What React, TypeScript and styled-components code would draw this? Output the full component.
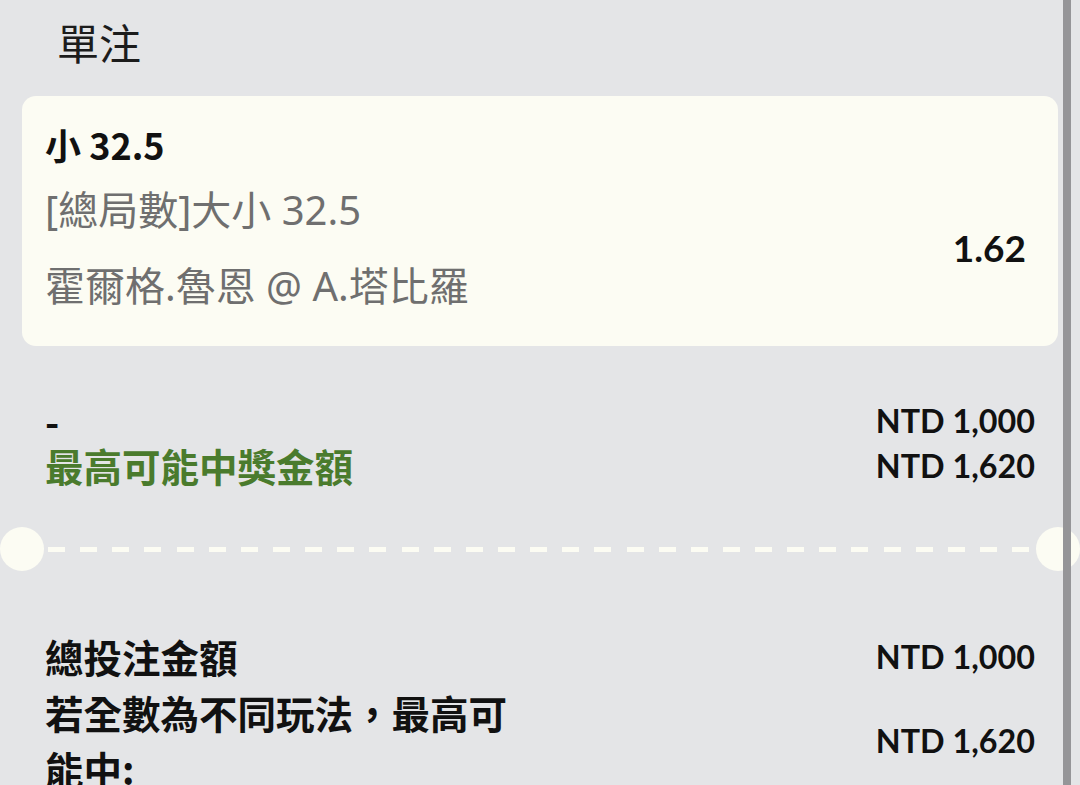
import React from "react";
import styled, { createGlobalStyle } from "styled-components";

const GlobalStyle = createGlobalStyle`
  html, body {
    margin: 0;
    padding: 0;
    background: #e4e5e7;
    overflow: hidden;
  }
  body {
    font-family: "Noto Sans CJK TC", "Noto Sans", sans-serif;
    color: #121212;
  }
`;

const cream = "#fcfcf3";

const Page = styled.div`
  width: 1080px;
  height: 785px;
  box-sizing: border-box;
  padding: 12px 22px 0;
`;

const Title = styled.h1`
  margin: 0;
  padding-left: 35px;
  font-size: 42px;
  line-height: 60px;
  font-weight: 400;
  color: #1c1c1c;
`;

const BetCard = styled.div`
  margin-top: 24px;
  height: 250px;
  box-sizing: border-box;
  background: ${cream};
  border-radius: 14px;
  padding: 24px 32px 0 23px;
  display: flex;
  justify-content: space-between;
`;

const BetInfo = styled.div`
  display: flex;
  flex-direction: column;
`;

const Selection = styled.div`
  font-family: "Noto Sans CJK TC", sans-serif;
  font-size: 36px;
  font-weight: 700;
  line-height: 48px;
  color: #111;
`;

const Detail = styled.div<{ $gap: number }>`
  margin-top: ${(p) => p.$gap}px;
  font-family: "Noto Sans", "Noto Sans CJK TC", sans-serif;
  font-size: 40px;
  line-height: 60px;
  color: #6f6f6f;
`;

const Odds = styled.div`
  align-self: center;
  margin-top: 28px;
  font-family: Lato, sans-serif;
  font-weight: 700;
  font-size: 37px;
  color: #111;
`;

const Section = styled.div<{ $top: number }>`
  margin-top: ${(p) => p.$top}px;
  padding: 0 23px;
  display: flex;
  flex-direction: column;
`;

const Row = styled.div<{ $h: number }>`
  display: flex;
  justify-content: space-between;
  align-items: center;
  min-height: ${(p) => p.$h}px;
`;

const Label = styled.div<{ $green?: boolean; $lh: number }>`
  font-family: "Noto Sans CJK TC", sans-serif;
  font-size: 38.5px;
  font-weight: 700;
  line-height: ${(p) => p.$lh}px;
  color: ${(p) => (p.$green ? "#4a7b2d" : "#111")};
  max-width: 490px;
`;

const Amount = styled.div`
  font-family: Lato, sans-serif;
  font-weight: 700;
  font-size: 32.3px;
  color: #111;
  white-space: nowrap;
`;

const Divider = styled.div`
  margin: 39px -22px 0;
  height: 44px;
  display: flex;
  align-items: center;
  gap: 4px;
`;

const Notch = styled.div`
  width: 44px;
  height: 44px;
  border-radius: 50%;
  background: ${cream};
  flex: none;
`;

const Dashes = styled.div`
  flex: 1;
  height: 5px;
  background: repeating-linear-gradient(
    to right,
    ${cream} 0 17px,
    transparent 17px 32.14px
  );
`;

const ScrollBar = styled.div`
  position: fixed;
  top: 0;
  left: 1063px;
  width: 8px;
  height: 100%;
  background: #959598;
`;

export default function App() {
  return (
    <>
      <GlobalStyle />
      <Page>
        <Title>單注</Title>
        <BetCard>
          <BetInfo>
            <Selection>小 32.5</Selection>
            <Detail $gap={12}>[總局數]大小 32.5</Detail>
            <Detail $gap={16}>霍爾格.魯恩 @ A.塔比羅</Detail>
          </BetInfo>
          <Odds>1.62</Odds>
        </BetCard>

        <Section $top={52}>
          <Row $h={45}>
            <Label $lh={45}>-</Label>
            <Amount>NTD 1,000</Amount>
          </Row>
          <Row $h={45}>
            <Label $lh={45} $green>
              最高可能中獎金額
            </Label>
            <Amount>NTD 1,620</Amount>
          </Row>
        </Section>

        <Divider>
          <Notch />
          <Dashes />
          <Notch />
        </Divider>

        <Section $top={57}>
          <Row $h={56}>
            <Label $lh={56}>總投注金額</Label>
            <Amount>NTD 1,000</Amount>
          </Row>
          <Row $h={112}>
            <Label $lh={56}>若全數為不同玩法，最高可能中:</Label>
            <Amount>NTD 1,620</Amount>
          </Row>
        </Section>
      </Page>
      <ScrollBar />
    </>
  );
}
